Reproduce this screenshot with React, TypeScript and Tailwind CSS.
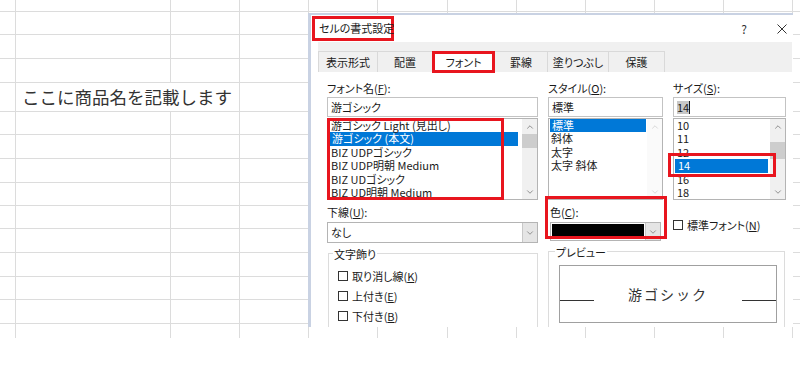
import { ChevronDown, ChevronUp } from 'lucide-react';

const COLS = 12;
const ROWS = 15;
const TEXT_ROW = 4;

const fonts = ['游ゴシック Light (見出し)', '游ゴシック (本文)', 'BIZ UDPゴシック', 'BIZ UDP明朝 Medium', 'BIZ UDゴシック', 'BIZ UD明朝 Medium'];
const styles = ['標準', '斜体', '太字', '太字 斜体'];
const sizes = ['10', '11', '12', '14', '16', '18'];
const tabs = [
    { label: '表示形式', w: 'w-[60px]' },
    { label: '配置', w: 'w-[55px]' },
    { label: 'フォント', w: 'w-[62px]', active: true },
    { label: '罫線', w: 'w-[53px]' },
    { label: '塗りつぶし', w: 'w-[61px]' },
    { label: '保護', w: 'w-[56px]' },
];

const Sheet = () => {
    const cells = [];
    for (let r = 0; r < ROWS; r++) {
        for (let c = 0; c < COLS; c++) {
            const lastRow = r === ROWS - 1;
            const lastCol = c === COLS - 1;
            if (r === TEXT_ROW && c === 2) continue;
            if (r === TEXT_ROW && c === 1) {
                cells.push(
                    <div key={`${r}-${c}`} className="col-span-2 border-r border-b border-[#dcdcdc] flex items-center pl-[6px] text-[17.5px] text-[#333] whitespace-nowrap">
                        ここに商品名を記載します
                    </div>
                );
                continue;
            }
            cells.push(
                <div key={`${r}-${c}`} className={`border-[#dcdcdc] ${lastCol ? '' : 'border-r'} ${lastRow ? '' : 'border-b'}`} />
            );
        }
    }
    return (
        <div className="grid grid-cols-[16px_155px_69px_69px_69px_70px_69px_69px_69px_69px_69px_7px] grid-rows-[12px_23px_24px_24px_29px_23px_24px_24px_23px_23px_24px_24px_23px_24px_14px]">
            {cells}
        </div>
    );
};

const ScrollBar = ({ thumb, disabled }: { thumb?: string; disabled?: boolean }) => (
    <div className={`w-[15px] h-full flex flex-col ${disabled ? 'bg-[#fafafa]' : 'bg-[#f0f0f0]'}`}>
        <div className="h-[15px] flex items-center justify-center">
            <ChevronUp size={10} strokeWidth={1.6} className={disabled ? 'text-[#c8c8c8]' : 'text-[#606060]'} />
        </div>
        <div className="flex-1">
            {thumb && <div className={`bg-[#cdcdcd] ${thumb}`} />}
        </div>
        <div className="h-[15px] flex items-center justify-center">
            <ChevronDown size={10} strokeWidth={1.6} className={disabled ? 'text-[#c8c8c8]' : 'text-[#606060]'} />
        </div>
    </div>
);

const ListBox = ({ items, selected, thumb, disabled, selW, textPl }: { items: string[]; selected: number; thumb?: string; disabled?: boolean; selW: string; textPl: string }) => (
    <div className="h-[82px] border border-[#b4b4b4] bg-white flex">
        <div className="flex-1 min-w-0 overflow-hidden">
            {items.map((it, i) => (
                <div key={it} className={`h-[13.4px] leading-[13.4px] whitespace-nowrap ${textPl} ${i === selected ? `bg-[#0078d7] text-white ml-[1px] ${selW}` : 'text-[#1a1a1a]'}`}>
                    {it}
                </div>
            ))}
        </div>
        <ScrollBar thumb={thumb} disabled={disabled} />
    </div>
);

const Label = ({ text, k, rest = '):' }: { text: string; k: string; rest?: string }) => (
    <div className="h-[14px] leading-[14px] text-[#1a1a1a] whitespace-nowrap">
        {text}(<span className="underline">{k}</span>{rest}
    </div>
);

const Check = ({ text, k }: { text: string; k: string }) => (
    <div className="flex items-center gap-[4px] h-[20px] text-[#1a1a1a] whitespace-nowrap">
        <div className="w-[10px] h-[10px] border border-[#333] bg-white" />
        <span>{text}(<span className="underline">{k}</span>)</span>
    </div>
);

const DropButton = () => (
    <div className="w-[15px] h-full bg-[#e5e5e5] border-l border-[#c8c8c8] flex items-center justify-center">
        <ChevronDown size={10} strokeWidth={1.5} className="text-[#606060]" />
    </div>
);

const Dialog = () => (
    <div className="absolute left-[308px] top-[13px] w-[485px] h-[314px] bg-white border-l-[3px] border-t-2 border-[#c9d2e3] overflow-hidden flex flex-col text-[11px] [font-feature-settings:'palt']">
        {/* title bar */}
        <div className="h-[27px] shrink-0 flex items-center pl-[1px] pr-[6px]">
            <div className="w-[82px] h-[25px] border-[3px] border-[#e8151e] flex items-center pl-[4px] text-[11px] text-[#1a1a1a] whitespace-nowrap">
                セルの書式設定
            </div>
            <div className="ml-auto flex items-center gap-[30px] text-[#333]">
                <span className="text-[12px]">?</span>
                <svg width="10" height="10" viewBox="0 0 10 10" className="text-[#333]">
                    <path d="M0.5 0.5L9.5 9.5M9.5 0.5L0.5 9.5" stroke="currentColor" strokeWidth="1" />
                </svg>
            </div>
        </div>

        {/* tabs */}
        <div className="ml-[7px] mr-[1px] h-[30px] shrink-0 bg-[#f0f0f0] flex items-end">
            {tabs.map((t, i) => (
                <div key={t.label} className={`relative h-[21px] ${t.w} flex items-center justify-center border-t border-r border-[#d9d9d9] ${i === 0 ? 'border-l' : ''} ${t.active ? 'bg-white' : 'bg-[#f0f0f0]'} text-[#1a1a1a]`}>
                    {t.label}
                    {t.active && <div className="absolute -left-[1px] -right-[1px] -top-[1px] -bottom-[1px] border-[3px] border-[#e8151e]" />}
                </div>
            ))}
        </div>

        {/* panel */}
        <div className="ml-[7px] mr-[1px] flex-1 bg-white pl-[9px] pt-[9px]">
            <div className="flex">
                <div className="w-[211px]">
                    <Label text="フォント名" k="F" />
                    <div className="mt-[2px] h-[20px] border border-[#c3c3c3] flex items-center pl-[3px] text-[#1a1a1a]">游ゴシック</div>
                    <div className="relative mt-[1px]">
                        <ListBox items={fonts} selected={1} thumb="h-[14px]" selW="mr-[4px]" textPl="pl-[3px]" />
                        <div className="absolute left-0 top-0 w-[177px] h-[82px] border-[3px] border-[#e8151e]" />
                    </div>
                </div>
                <div className="w-[115px] ml-[10px]">
                    <Label text="スタイル" k="O" />
                    <div className="mt-[2px] h-[20px] border border-[#c3c3c3] flex items-center pl-[3px] text-[#1a1a1a]">標準</div>
                    <div className="mt-[1px]">
                        <ListBox items={styles} selected={0} disabled selW="mr-[1px]" textPl="pl-[2px]" />
                    </div>
                </div>
                <div className="w-[113px] ml-[10px]">
                    <Label text="サイズ" k="S" />
                    <div className="mt-[2px] h-[20px] border border-[#c3c3c3] flex items-center pl-[3px] text-[#1a1a1a]">
                        <span className="bg-[#c8c8c8] leading-[13px]">14</span>
                        <span className="w-[1px] h-[13px] bg-[#1a1a1a]" />
                    </div>
                    <div className="relative mt-[1px]">
                        <ListBox items={sizes} selected={3} thumb="mt-[8px] h-[17px]" selW="mr-[2px]" textPl="pl-[3px]" />
                        <div className="absolute -left-[5px] top-[35px] w-[108px] h-[24px] border-[3px] border-[#e8151e]" />
                    </div>
                </div>
            </div>

            <div className="flex mt-[5px]">
                <div className="w-[211px]">
                    <Label text="下線" k="U" />
                    <div className="mt-[3px] h-[21px] border border-[#b4b4b4] flex items-center text-[#1a1a1a]">
                        <span className="flex-1 pl-[3px]">なし</span>
                        <DropButton />
                    </div>
                    <div className="relative mt-[10px] ml-[1px] h-[90px] border border-[#dcdcdc] pl-[9px] pt-[12px]">
                        <span className="absolute left-[4px] -top-[8px] bg-white px-[1px] text-[#1a1a1a]">文字飾り</span>
                        <Check text="取り消し線" k="K" />
                        <Check text="上付き" k="E" />
                        <Check text="下付き" k="B" />
                    </div>
                </div>
                <div className="w-[239px] ml-[10px]">
                    <div className="flex">
                        <div className="relative w-[115px]">
                            <div className="pl-[2px]"><Label text="色" k="C" /></div>
                            <div className="mt-[3px] ml-[2px] w-[111px] h-[19px] border border-[#b4b4b4] flex">
                                <div className="flex-1 m-[1px] bg-black" />
                                <DropButton />
                            </div>
                            <div className="absolute -left-[3px] -top-[9px] w-[122px] h-[43px] border-[3px] border-[#e8151e]" />
                        </div>
                        <div className="ml-[10px] mt-[12px]">
                            <div className="flex items-center gap-[4px] h-[16px] text-[#1a1a1a] whitespace-nowrap">
                                <div className="w-[10px] h-[10px] border border-[#333] bg-white" />
                                <span>標準フォント(<span className="underline">N</span>)</span>
                            </div>
                        </div>
                    </div>
                    <div className="relative mt-[10px] w-[237px] h-[90px] border border-[#dcdcdc] pl-[10px] pt-[13px]">
                        <span className="absolute left-[6px] -top-[8px] bg-white px-[1px] text-[#1a1a1a]">プレビュー</span>
                        <div className="w-[218px] h-[58px] border border-[#a0a0a0] flex items-center">
                            <div className="w-[34px] h-[1px] bg-[#333] mt-[12px]" />
                            <div className="flex-1 text-center text-[14px] tracking-[2px] text-[#333] [font-feature-settings:normal]">游ゴシック</div>
                            <div className="w-[34px] h-[1px] bg-[#333] mt-[12px]" />
                        </div>
                    </div>
                </div>
            </div>
        </div>
    </div>
);

export default function App() {
    return (
        <div className="relative w-[800px] h-[378px] bg-white overflow-hidden font-['Noto_Sans_CJK_JP','Noto_Sans',sans-serif]">
            <Sheet />
            <Dialog />
        </div>
    );
}
